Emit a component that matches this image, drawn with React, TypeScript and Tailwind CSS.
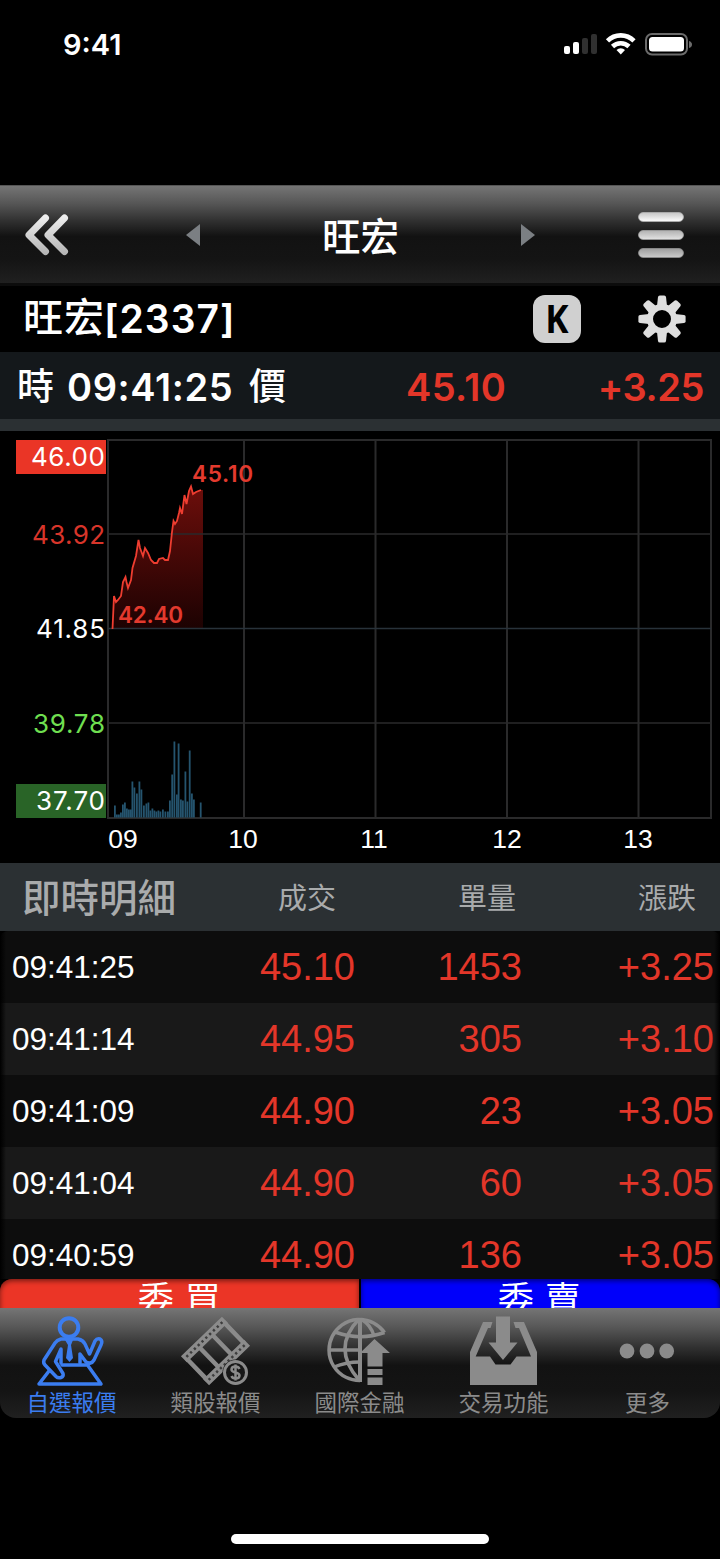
import type { ReactNode } from 'react'

const trades = [
  { time: '09:41:25', price: '45.10', volume: '1453', change: '+3.25' },
  { time: '09:41:14', price: '44.95', volume: '305', change: '+3.10' },
  { time: '09:41:09', price: '44.90', volume: '23', change: '+3.05' },
  { time: '09:41:04', price: '44.90', volume: '60', change: '+3.05' },
  { time: '09:40:59', price: '44.90', volume: '136', change: '+3.05' },
]

// [x, height] of every volume bar
const volumes = [
  [114, 12], [116, 3], [118, 3], [120, 5], [122, 13], [124, 15], [126, 9], [128, 8], [130, 8],
  [131.5, 36], [133.5, 30], [136, 24], [138.5, 36], [140.5, 28], [143, 12], [145.5, 14], [147.5, 15],
  [149.5, 7], [151.5, 9], [153.5, 7], [155.5, 6], [157.5, 7], [159.5, 6], [162, 8], [164.5, 6], [167, 6],
  [169, 17], [171.3, 43], [173.5, 76], [176, 23], [177.7, 74], [180, 18], [182, 17], [184.5, 46],
  [186.5, 16], [188.8, 67], [191, 24], [193, 18], [199.8, 15],
]

const line =
  '112.5,629 114,596 116,602 118,600 121,596 123,582 125.5,577 126.5,582 128,588 131,580 132.5,568 136,556 138.5,540 140,548 143,556 145,548 148,553 151,560 154,563 157,563 159,559 163,558 165,560 168,560 170,551 172,532 173.5,521 175,524 177,521 179,513 180,508 182,514 184.5,495 186.5,504 189,491 191,486.5 193,494 196,492 201,490'

export default function App() {
  return (
    <div className="flex h-[1559px] w-[720px] flex-col overflow-hidden bg-black font-['Inter','Noto_Sans_CJK_TC',sans-serif] text-white">
      <StatusBar />
      <NavBar />

      <div className="flex h-[66px] items-center pr-[34px] pl-[23px]">
        <h2 className="flex w-[510px] items-center pb-[2px] text-[39px] leading-none font-semibold tracking-[1px] whitespace-nowrap">
          <span className="w-[81px] text-[40px] font-medium">旺宏</span>
          <span>[2337]</span>
        </h2>
        <div className="flex size-12 items-center justify-center rounded-xl bg-[#d0d0d0] font-['Noto_Sans',sans-serif] text-[39px] leading-none font-bold text-black">
          <span className="-mt-1 scale-x-90">K</span>
        </div>
        <GearIcon />
      </div>

      <div className="flex h-[79px] items-center border-b-12 border-[#2b3033] bg-[#14181b] pt-[2px] pr-[16px] pl-[17px] text-[38px] leading-none font-semibold whitespace-nowrap">
        <span className="w-[50px] text-[37px] font-medium">時</span>
        <span className="w-[182px] tracking-[0.6px]">09:41:25</span>
        <span className="w-[157px] text-[37px] font-medium">價</span>
        <span className="tracking-[0.4px] text-[#e33629]">45.10</span>
        <span className="ml-auto tracking-[-0.4px] text-[#e33629]">+3.25</span>
      </div>

      <Chart />

      <div className="flex h-[68px] items-center bg-[#2b3033] pt-[3px] text-[29px] text-[#a9abac]">
        <span className="w-[278px] pl-[22px] text-[38.5px] font-medium">即時明細</span>
        <span className="w-[180px]">成交</span>
        <span className="w-[180px]">單量</span>
        <span>漲跌</span>
      </div>

      <div className="h-[348px] overflow-hidden rounded-t-lg font-['Liberation_Sans',sans-serif] text-[38px] text-[#e33629]">
        {trades.map(({ time, price, volume, change }) => (
          <div
            key={time}
            className="flex h-[72px] items-center bg-[linear-gradient(90deg,#000,#0d0d0d_6px,#0d0d0d_714px,#000)] pt-px pr-[6px] even:bg-[linear-gradient(90deg,#000,#191919_6px,#191919_714px,#000)]"
          >
            <span className="w-[190px] pl-[12px] text-[31.5px] text-white">{time}</span>
            <span className="w-[165px] text-right">{price}</span>
            <span className="w-[167px] text-right">{volume}</span>
            <span className="flex-1 text-right">{change}</span>
          </div>
        ))}
      </div>

      <div className="flex h-[29px] gap-[2px] overflow-hidden text-[36px] leading-[42px] tracking-[0.5px]">
        <div className="h-[60px] w-[359px] rounded-tl-xl bg-[#eb3526] text-center shadow-[inset_0_2px_5px_rgba(0,0,0,0.5)]">委 買</div>
        <div className="h-[60px] w-[359px] rounded-tr-xl bg-[#0000fa] pr-[2px] text-center shadow-[inset_0_2px_5px_rgba(0,0,0,0.5)]">
          委 賣
        </div>
      </div>

      <TabBar />
      <div className="mx-auto mt-auto mb-[15px] h-[10px] w-[258px] rounded-full bg-white" />
    </div>
  )
}

const StatusBar = () => (
  <div className="flex h-[185px] items-start justify-between pt-[30px] pr-[28px] pl-[63px]">
    <span className="text-[29px] leading-[29px] font-semibold">9:41</span>
    <svg width="129" height="28" viewBox="563 30 129 28" fill="#fff">
      <rect x="564" y="46" width="6" height="8" rx="2" />
      <rect x="573" y="42" width="6" height="12" rx="2" />
      <rect x="582" y="38" width="6" height="16" rx="2" fill="#303030" />
      <rect x="591" y="34" width="6" height="20" rx="2" fill="#303030" />
      <g fill="none" stroke="#fff" strokeWidth="4.6">
        <path d="M607.5 40.8a19 19 0 0 1 26.5 0" />
        <path d="M612.5 46.500a12 12 0 0 1 16.500 0" />
      </g>
      <path d="M616.500 50a6 6 0 0 1 8.500 0l-4.200 4.500z" />
      <rect x="646" y="34" width="41" height="20.500" rx="6" fill="none" stroke="#6b6b6b" strokeWidth="2" />
      <rect x="649" y="37" width="35" height="14.500" rx="3.500" />
      <path d="M689 41q3 1 3 3.500t-3 3.500z" fill="#6b6b6b" />
    </svg>
  </div>
)

const NavBar = () => (
  <div className="flex h-[101px] items-center justify-between border-t border-b-3 border-t-[#555] border-b-[#0c0c0c] bg-[linear-gradient(#757575,#565656_18%,#303030_36%,#121212_52%,#141414_75%,#202020)] pr-[36px] pl-[24px]">
    <svg width="46" height="44" viewBox="24 213 46 44" fill="none" strokeWidth="7" strokeLinecap="round" strokeLinejoin="round">
      <defs>
        <linearGradient id="metal" gradientUnits="userSpaceOnUse" x1="0" y1="213" x2="0" y2="257">
          <stop stopColor="#f4f4f4" />
          <stop offset="1" stopColor="#b0b0b0" />
        </linearGradient>
      </defs>
      <path d="M45.500 218 29 235 45.500 251.500M64.500 218 48 235 64.500 251.500" stroke="url(#metal)" />
    </svg>
    <div className="ml-[13px] flex w-[350px] items-center justify-between">
      <svg width="14" height="22" fill="#7b7f83">
        <path d="M14 0v22L0 11z" />
      </svg>
      <h1 className="pt-[5px] text-[38.5px] leading-none font-medium">旺宏</h1>
      <svg width="14" height="22" fill="#7b7f83">
        <path d="M0 0v22l14-11z" />
      </svg>
    </div>
    <div className="flex w-[46px] flex-col gap-[8px]">
      <i className="h-[10px] rounded-full border border-[#aaa] bg-linear-to-b from-[#c8c8c8] to-[#fafafa]" />
      <i className="h-[10px] rounded-full border border-[#999] bg-linear-to-b from-[#b4b4b4] to-[#e0e0e0]" />
      <i className="h-[10px] rounded-full border border-[#888] bg-linear-to-b from-[#a0a0a0] to-[#c9c9c9]" />
    </div>
  </div>
)

const GearIcon = () => (
  <svg className="ml-auto" width="48" height="48" viewBox="-24 -24 48 48" fill="#dedede">
    {[0, 45, 90, 135, 180, 225, 270, 315].map((angle) => (
      <path key={angle} transform={`rotate(${angle})`} d="M-5-13-4-22q.2-1.600 1.800-1.600h4.400q1.600 0 1.800 1.600L5-13z" />
    ))}
    <circle r="12" fill="none" stroke="#dedede" strokeWidth="6" />
  </svg>
)

const Chart = () => (
  <svg className="shrink-0" width="720" height="432" viewBox="0 431 720 432">
    <defs>
      <linearGradient id="area" x1="0" y1="0" x2="0" y2="1">
        <stop stopColor="#6d0e0b" />
        <stop offset="1" stopColor="#1c0202" />
      </linearGradient>
    </defs>
    <polygon points={`${line} 203,490 203,628`} fill="url(#area)" />
    <g stroke="#2a2a2b" strokeWidth="2" fill="none">
      <rect x="108" y="440" width="603" height="378" />
      <path d="M244 440v378M375.500 440v378M507 440v378M638.500 440v378" />
      <path d="M108 534h603M108 723h603" strokeWidth="1.500" />
      <path d="M108 628.500h603" stroke="#28323a" strokeWidth="1.500" />
    </g>
    <polyline points={line} fill="none" stroke="#ee3d30" strokeWidth="1.800" />
    {volumes.map(([x, h]) => (
      <rect key={x} x={x} y={817.500 - h} width="1.800" height={h} fill="#25546e" />
    ))}
    <rect x="16" y="440" width="90" height="34" fill="#ea3526" />
    <rect x="16" y="784" width="90" height="34" fill="#296427" />
    <g fontSize="26" textAnchor="end" fill="#fff">
      <text x="105" y="466" textLength="74">46.00</text>
      <text x="105" y="543.500" textLength="73" fill="#d8352a">43.92</text>
      <text x="105" y="638" textLength="69">41.85</text>
      <text x="105" y="732.500" textLength="72" fill="#6fdf50">39.78</text>
      <text x="105" y="810" textLength="69">37.70</text>
    </g>
    <g fontSize="22.500" fontWeight="600" fill="#e33a2e">
      <text x="192" y="482" textLength="61">45.10</text>
      <text x="118" y="622.500" textLength="65">42.40</text>
    </g>
    <g fontSize="26.500" textAnchor="middle" fill="#fff" className="font-['Liberation_Sans',sans-serif]">
      <text x="123" y="848">09</text>
      <text x="243" y="848">10</text>
      <text x="374" y="848">11</text>
      <text x="507" y="848">12</text>
      <text x="638" y="848">13</text>
    </g>
  </svg>
)

const Tab = ({ label, active, children }: { label: string; active?: boolean; children: ReactNode }) => (
  <div className={`flex w-36 flex-col items-center pt-2 ${active ? 'text-[#3b7df0]' : 'text-[#8b8b8b]'}`}>
    <svg width="72" height="72" viewBox="0 0 72 72" fill="none" stroke="currentColor" strokeWidth="4">
      {children}
    </svg>
    <span className="mt-[3px] pr-[1px] text-[22.500px] leading-[24px]">{label}</span>
  </div>
)

const TabBar = () => (
  <div className="flex h-[110px] rounded-b-2xl bg-[linear-gradient(#757575,#565656_18%,#303030_36%,#121212_52%,#141414_75%,#202020)]">
    <Tab label="自選報價" active>
      <circle cx="33" cy="11.500" r="9.300" />
      <g strokeLinejoin="round" strokeLinecap="round" strokeWidth="3.500">
        <path d="M25 47V33l-5.500 12.500 7.500 12q1 3-2 4t-5-1L9 49q-2-2-1-5l11-17q2-3 6-4h17q5 1 7 5l4.500 10L59 25q2-3 5-2 3 2 1 6l-7 15q-3 5-8 2l-6-8v9" />
        <path d="M26 49h25.500L65 68H3l10-13" />
      </g>
      <path d="M29 24h8l-2 5 2 13-3.500 4-3.500-4 2-13z" fill="currentColor" stroke="none" />
    </Tab>
    <Tab label="類股報價">
      <g transform="rotate(-44 35.500 35)">
        <path d="M7 19h57M7 51h57" strokeWidth="8.500" />
        <path d="M9.500 20v30M26.500 20v30M44.500 20v30M61.500 20v30" strokeWidth="4.500" />
        <path d="M10.500 19h52M10.500 51h52" stroke="#3c3c3c" strokeWidth="2.500" strokeDasharray="2.300 3" />
      </g>
      <circle cx="55.500" cy="56.500" r="13" fill="#171717" stroke="none" />
      <circle cx="55.500" cy="56.500" r="11" strokeWidth="3" />
      <path d="M59.500 53q-1-2.500-4-2.500-4 0-4 3 0 2 4 3t4 3q0 3-4 3-3 0-4-2.500M55.500 48.500v16" strokeWidth="2.500" />
    </Tab>
    <Tab label="國際金融">
      <g strokeWidth="3.500">
        <path d="M60.500 16.500A30.500 30.500 0 1 0 36 64.500M5 34h31M11 16q25 9 49.500.5M10 51q12-5 26-5" />
        <path d="M35 3Q7 32 35 64M37 3q10 6 13 17" />
        <path d="M36 2v64" strokeWidth="4" />
      </g>
      <path d="M50.500 23 66 37h-7.500v13.500h-15V37H36zM43.500 53h15v6h-15zM43.500 61.500h15V69h-15z" fill="currentColor" stroke="none" />
    </Tab>
    <Tab label="交易功能">
      <path
        d="M2 69V36L15 6h9.500l-2 6H20L7.700 40.500H22l5.500 8h15l6-8H63L51 12h-3.500l-2-6H56l13 30v33z"
        fill="currentColor"
        stroke="none"
      />
      <path d="M28 .5h14v26h7.500L35 44 20.500 26.500H28z" fill="currentColor" stroke="none" />
    </Tab>
    <Tab label="更多">
      <g fill="currentColor" stroke="none">
        <circle cx="15" cy="35" r="7.400" />
        <circle cx="35" cy="35" r="7.400" />
        <circle cx="54.700" cy="35" r="7.400" />
      </g>
    </Tab>
  </div>
)
